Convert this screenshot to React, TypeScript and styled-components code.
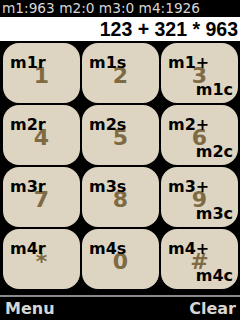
import styled, { createGlobalStyle } from "styled-components";

const GlobalStyle = createGlobalStyle`
  html, body {
    margin: 0;
    padding: 0;
    background: #000;
  }
  body {
    font-family: "DejaVu Sans", sans-serif;
  }
`;

const Screen = styled.div`
  width: 240px;
  height: 320px;
  background: #000;
  display: flex;
  flex-direction: column;
  overflow: hidden;
`;

const StatusBar = styled.div`
  height: 17px;
  padding-left: 2px;
  color: #d6d6d6;
  font-size: 13.7px;
  line-height: 17px;
  white-space: nowrap;
`;

const Display = styled.div`
  height: 24px;
  background: #fff;
  color: #000;
  text-align: right;
  padding-right: 2px;
  font-family: "Liberation Sans", sans-serif;
  font-weight: bold;
  font-size: 19.5px;
  line-height: 25px;
  white-space: nowrap;
`;

const Keypad = styled.div`
  display: grid;
  grid-template-columns: repeat(3, 77px);
  grid-auto-rows: 60px;
  gap: 2px;
  padding: 2px 2px 6px 3px;
`;

const Key = styled.div`
  display: grid;
  background: #ddd4c1;
  border-radius: 16px;
  & > * {
    grid-area: 1 / 1;
  }
`;

const Label = styled.span`
  justify-self: start;
  align-self: start;
  margin: 12px 0 0 7px;
  font-weight: bold;
  font-size: 16px;
  line-height: 16px;
  color: #000;
`;

const Digit = styled.span`
  justify-self: center;
  align-self: center;
  margin-top: 5px;
  font-weight: bold;
  font-size: 22px;
  line-height: 22px;
  color: #7e6b44;
`;

const CornerLabel = styled.span`
  justify-self: end;
  align-self: end;
  margin: 0 5px 5px 0;
  font-weight: bold;
  font-size: 16px;
  line-height: 16px;
  color: #000;
`;

const SoftKeys = styled.div`
  flex: 1;
  display: flex;
  justify-content: space-between;
  align-items: center;
  border-top: 2px solid #8a8a8a;
  padding: 0 4px 0 5px;
  color: #d6d6d6;
  font-weight: bold;
  font-size: 16px;
`;

type KeyDef = { label: string; digit: string; corner?: string };

const keys: KeyDef[] = [
  { label: "m1r", digit: "1" },
  { label: "m1s", digit: "2" },
  { label: "m1+", digit: "3", corner: "m1c" },
  { label: "m2r", digit: "4" },
  { label: "m2s", digit: "5" },
  { label: "m2+", digit: "6", corner: "m2c" },
  { label: "m3r", digit: "7" },
  { label: "m3s", digit: "8" },
  { label: "m3+", digit: "9", corner: "m3c" },
  { label: "m4r", digit: "*" },
  { label: "m4s", digit: "0" },
  { label: "m4+", digit: "#", corner: "m4c" },
];

export default function App() {
  return (
    <Screen>
      <GlobalStyle />
      <StatusBar>m1:963 m2:0 m3:0 m4:1926</StatusBar>
      <Display>123 + 321 * 963</Display>
      <Keypad>
        {keys.map((k) => (
          <Key key={k.label}>
            <Digit>{k.digit}</Digit>
            <Label>{k.label}</Label>
            {k.corner && <CornerLabel>{k.corner}</CornerLabel>}
          </Key>
        ))}
      </Keypad>
      <SoftKeys>
        <span>Menu</span>
        <span>Clear</span>
      </SoftKeys>
    </Screen>
  );
}
